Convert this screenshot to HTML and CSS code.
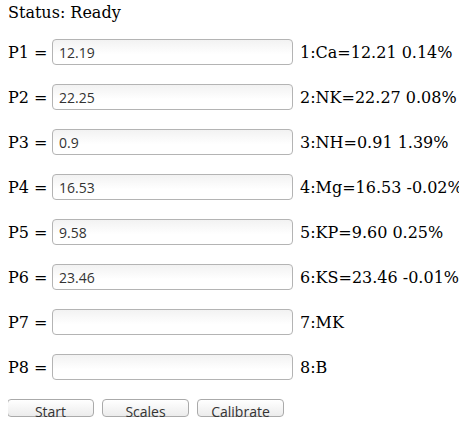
FILE: index.html
```html
<!DOCTYPE html>
<html lang="en">
<head>
  <meta charset="UTF-8">
  <title>Scale Calibration</title>
  <link rel="stylesheet" href="styles.css">
</head>
<body>
  <div class="status">Status: Ready</div>
  <div class="rows">
    <div class="row"><label for="p1">P1 =</label><input id="p1" type="text" value="12.19"><span class="result">1:Ca=12.21 0.14%</span></div>
    <div class="row"><label for="p2">P2 =</label><input id="p2" type="text" value="22.25"><span class="result">2:NK=22.27 0.08%</span></div>
    <div class="row"><label for="p3">P3 =</label><input id="p3" type="text" value="0.9"><span class="result">3:NH=0.91 1.39%</span></div>
    <div class="row"><label for="p4">P4 =</label><input id="p4" type="text" value="16.53"><span class="result">4:Mg=16.53 -0.02%</span></div>
    <div class="row"><label for="p5">P5 =</label><input id="p5" type="text" value="9.58"><span class="result">5:KP=9.60 0.25%</span></div>
    <div class="row"><label for="p6">P6 =</label><input id="p6" type="text" value="23.46"><span class="result">6:KS=23.46 -0.01%</span></div>
    <div class="row"><label for="p7">P7 =</label><input id="p7" type="text" value=""><span class="result">7:MK</span></div>
    <div class="row"><label for="p8">P8 =</label><input id="p8" type="text" value=""><span class="result">8:B</span></div>
  </div>
  <div class="buttons">
    <button>Start</button>
    <button>Scales</button>
    <button>Calibrate</button>
  </div>
</body>
</html>
```
FILE: styles.css
```css
body {
  margin: 3px 8px 0;
  font-family: "DejaVu Serif", serif;
  font-size: 16px;
  color: #000;
  background: #fff;
}

.status {
  line-height: 19px;
  margin-bottom: 17px;
}

.rows {
  display: flex;
  flex-direction: column;
  gap: 19px;
}

.row {
  display: flex;
  align-items: center;
  height: 26px;
}

.row label {
  width: 44px;
  flex: none;
}

.row input {
  flex: none;
  box-sizing: border-box;
  width: 241px;
  height: 26px;
  margin: 0;
  padding: 0 6px;
  border: 1px solid #b4b4b4;
  border-radius: 4px;
  background: linear-gradient(#f2f2f2, #fff 60%);
  font-family: "Open Sans", "DejaVu Sans", sans-serif;
  font-size: 14px;
  color: #333;
  outline: none;
}

.result {
  flex: none;
  margin-left: 7px;
  white-space: nowrap;
}

.buttons {
  display: flex;
  gap: 8px;
  margin-top: 19px;
  margin-left: -1px;
}

.buttons button {
  box-sizing: border-box;
  width: 87px;
  height: 18px;
  padding: 4px 0 0;
  border: 1px solid #aaa;
  border-radius: 4px;
  background: linear-gradient(#fff, #ececec);
  font-family: "Open Sans", "DejaVu Sans", sans-serif;
  font-size: 14px;
  line-height: 16px;
  color: #333;
  overflow: visible;
}
```
